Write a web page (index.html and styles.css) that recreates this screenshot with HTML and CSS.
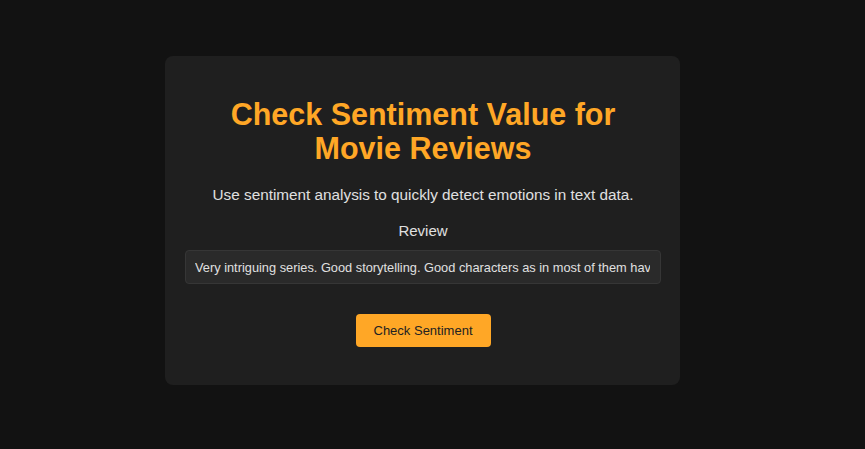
FILE: index.html
```html
<!DOCTYPE html>
<html>
<head>
<meta charset="utf-8">
<link rel="stylesheet" href="styles.css">
</head>
<body>
<main class="page">
  <section class="card">
    <h1 class="title">Check Sentiment Value for Movie Reviews</h1>
    <p class="subtitle">Use sentiment analysis to quickly detect emotions in text data.</p>
    <label class="label" for="review">Review</label>
    <input class="input" id="review" type="text" value="Very intriguing series. Good storytelling. Good characters as in most of them have depth and are interesting.">
    <button class="button">Check Sentiment</button>
  </section>
</main>
</body>
</html>
```
FILE: styles.css
```css
html, body {
  margin: 0;
  padding: 0;
  background: #121212;
  font-family: "Liberation Sans", Arial, sans-serif;
  color: #e0e0e0;
}
.page {
  height: 449px;
  display: flex;
  justify-content: center;
  align-items: flex-start;
  padding: 56px 20px 0 0;
  box-sizing: border-box;
}
.card {
  width: 515px;
  box-sizing: border-box;
  background: #1f1f1f;
  border-radius: 8px;
  padding: 41px 19px 38px 20px;
  display: flex;
  flex-direction: column;
  align-items: center;
  text-align: center;
}
.title {
  margin: 0;
  width: 420px;
  font-size: 30.5px;
  line-height: 34px;
  font-weight: bold;
  color: #ffa726;
}
.subtitle {
  margin: 20px 0 0;
  font-size: 15.3px;
  line-height: 20px;
  color: #e0e0e0;
}
.label {
  margin-top: 16px;
  font-size: 15px;
  line-height: 20px;
  color: #e0e0e0;
}
.input {
  margin-top: 9px;
  width: 476px;
  height: 34px;
  box-sizing: border-box;
  background: #2a2a2a;
  border: 1px solid #363636;
  border-radius: 4px;
  padding: 0 10px 0 9px;
  font-family: "Liberation Sans", Arial, sans-serif;
  font-size: 12.8px;
  color: #e0e0e0;
  outline: none;
}
.button {
  margin-top: 30px;
  width: 135px;
  height: 33px;
  background: #ffa726;
  border: none;
  border-radius: 4px;
  font-family: "Liberation Sans", Arial, sans-serif;
  font-size: 13px;
  color: #222;
  cursor: pointer;
}
```
